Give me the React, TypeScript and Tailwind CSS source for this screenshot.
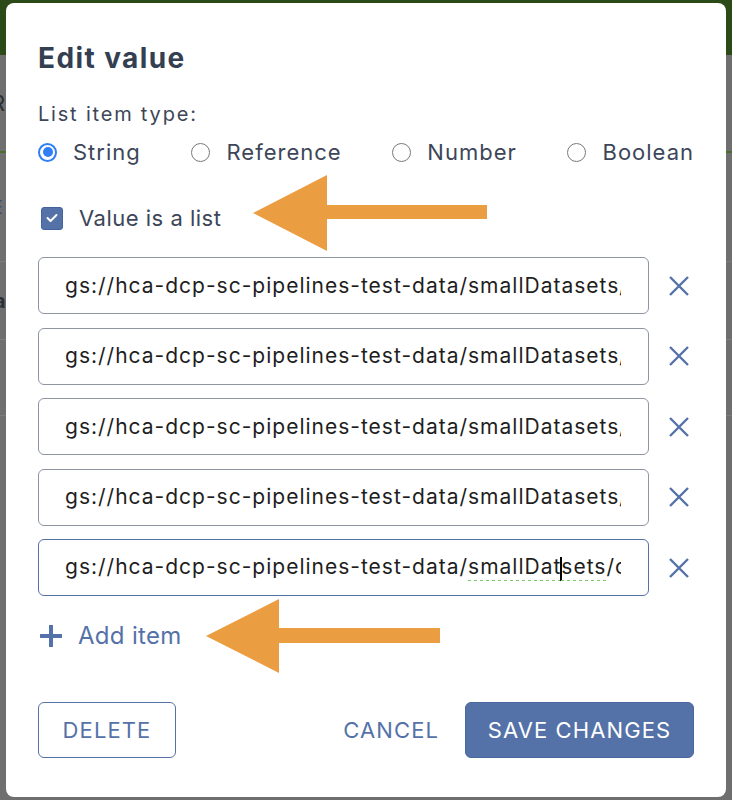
import React from "react";

const BLUE = "#5472a8";

function Radio({ checked, label }: { checked?: boolean; label: string }) {
  return (
    <div className="flex items-center gap-[16px]">
      {checked ? (
        <div className="w-[19px] h-[19px] rounded-full border-2 border-[#2f7ff6] flex items-center justify-center">
          <div className="w-[10px] h-[10px] rounded-full bg-[#2f7ff6]" />
        </div>
      ) : (
        <div className="w-[19px] h-[19px] rounded-full border-[1.5px] border-[#7a7a7a]" />
      )}
      <span className="text-[22px] leading-[24px] tracking-[1px] text-[#3c4658]">{label}</span>
    </div>
  );
}

function XIcon() {
  return (
    <svg width="22" height="22" viewBox="0 0 22 22" className="shrink-0">
      <path d="M2 2 L20 20 M20 2 L2 20" stroke={BLUE} strokeWidth="2.4" strokeLinecap="butt" />
    </svg>
  );
}

function Row({ children, active }: { children: React.ReactNode; active?: boolean }) {
  return (
    <div className="flex items-center gap-[19px]">
      <div
        className={
          "w-[611px] h-[57px] rounded-[6px] border flex items-center pl-[26px] pr-[27px] " +
          (active ? "border-[#5472a8]" : "border-[#8e95a1]")
        }
      >
        <div className="relative w-full overflow-hidden whitespace-nowrap text-[21px] leading-[26px] tracking-[1px] text-[#1e1e1e]">
          {children}
        </div>
      </div>
      <XIcon />
    </div>
  );
}

export default function App() {
  const base = "gs://hca-dcp-sc-pipelines-test-data/smallDatasets/fastq_R1.fastq.gz";
  return (
    <div className="relative w-[732px] h-[800px] overflow-hidden bg-[#6f6f6f] font-['Inter','Noto_Sans',sans-serif]">
      {/* background page behind overlay */}
      <div className="h-[55px] bg-[#2c4a17]" />
      <div className="h-[98px] border-b-2 border-[#4c6a2b] flex items-center">
        <span className="ml-[-9px] text-[22px] text-[#2b2f36]">R</span>
      </div>
      <div className="h-[109px] border-b border-[#7c7c7c] flex items-center">
        <span className="ml-[-8px] text-[18px] text-[#3a4d78]">E</span>
      </div>
      <div className="h-[78px] border-b border-[#7c7c7c] flex items-center">
        <span className="ml-[-6px] text-[20px] font-bold text-[#2b2f36]">a</span>
      </div>
      <div className="h-[76px] border-b border-[#7c7c7c]" />

      {/* modal */}
      <div className="absolute left-[6px] top-[3px] w-[720px] h-[794px] bg-white rounded-[8px] px-[32px] pt-[38px] flex flex-col">
        <h2 className="text-[28px] leading-[34px] font-bold text-[#343f52] tracking-[1.4px]">Edit value</h2>
        <div className="mt-[28px] text-[20px] leading-[22px] tracking-[1.8px] text-[#3c4658]">List item type:</div>
        <div className="mt-[15px] h-[24px] flex items-center justify-between">
          <Radio checked label="String" />
          <Radio label="Reference" />
          <Radio label="Number" />
          <Radio label="Boolean" />
        </div>
        <div className="mt-[42px] h-[24px] flex items-center gap-[16px] pl-[3px]">
          <div className="w-[22px] h-[23px] rounded-[3px] bg-[#5472a8] border border-[#4462a0] flex items-center justify-center">
            <svg width="12" height="10" viewBox="0 0 12 10">
              <path d="M1.5 5 L4.5 8 L10.5 2" fill="none" stroke="white" strokeWidth="2" strokeLinecap="round" strokeLinejoin="round" />
            </svg>
          </div>
          <span className="text-[22px] leading-[24px] tracking-[0.5px] text-[#3c4658]">Value is a list</span>
        </div>
        <div className="mt-[27px] flex flex-col gap-[13.5px]">
          <Row>{base}</Row>
          <Row>{base}</Row>
          <Row>{base}</Row>
          <Row>{base}</Row>
          <Row active>
            <span>gs://hca-dcp-sc-pipelines-test-data/</span>
            <span className="underline decoration-dotted decoration-[#7cc46a] decoration-[3px] underline-offset-[6px]">smallDat</span>
            <span className="inline-block w-[1.5px] h-[24px] bg-black align-middle ml-[-1px] mr-[-0.5px]" />
            <span className="underline decoration-dotted decoration-[#7cc46a] decoration-[3px] underline-offset-[6px]">sets</span>
            <span>/contents/fastq_R1.fastq.gz</span>
          </Row>
        </div>
        <div className="mt-[28px] h-[24px] flex items-center gap-[16px] pl-[2px]">
          <svg width="22" height="22" viewBox="0 0 22 22">
            <path d="M11 1 V21 M1 11 H21" stroke={BLUE} strokeWidth="4" strokeLinecap="round" />
          </svg>
          <span className="text-[24px] leading-[24px] tracking-[0.3px] text-[#5472a8]">Add item</span>
        </div>
        <div className="mt-[54px] flex items-center">
          <button className="w-[138px] h-[56px] rounded-[6px] border border-[#5472a8] text-[22px] tracking-[1.1px] text-[#5472a8] uppercase">
            Delete
          </button>
          <div className="flex-1" />
          <button className="h-[56px] px-[0px] text-[22px] tracking-[1.1px] text-[#5472a8] uppercase mr-[26px]">Cancel</button>
          <button className="w-[229px] h-[56px] rounded-[6px] bg-[#5472a8] border border-[#4a67a0] text-[22px] tracking-[1.1px] text-white uppercase">
            Save changes
          </button>
        </div>
      </div>

      {/* annotation arrows */}
      <svg className="absolute left-0 top-0 pointer-events-none" width="732" height="800" viewBox="0 0 732 800">
        <polygon points="253,213 327,175 327,205 487,205 487,219 327,219 327,251" fill="#eb9d42" />
        <polygon points="206,636 279,599 279,628 440,628 440,643 279,643 279,673" fill="#eb9d42" />
      </svg>
    </div>
  );
}
